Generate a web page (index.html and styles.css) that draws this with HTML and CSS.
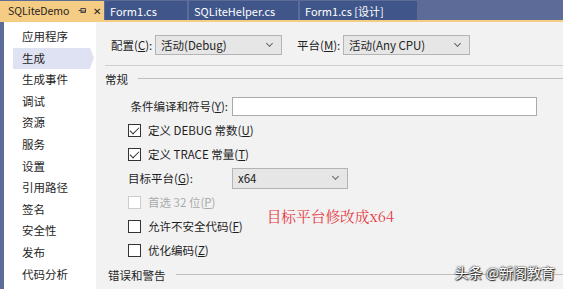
FILE: index.html
```html
<!DOCTYPE html>
<html lang="zh-CN">
<head>
    <meta charset="UTF-8">
    <title>SQLiteDemo</title>
    <link rel="stylesheet" href="styles.css">
</head>
<body>
    <div class="window">
        <div class="tabs">
            <div class="tab active">
                <span class="tab_name">SQLiteDemo</span>
                <span class="pin"><svg width="9" height="7" viewBox="0 0 9 7"><path d="M0.5 3.5H3M3 1V6M3 1.5H7.5V5.5H3M3 4H7.5" fill="none" stroke="#444" stroke-width="1"/></svg></span>
                <span class="close">&#x2715;</span>
            </div>
            <div class="tab t1">Form1.cs</div>
            <div class="tab t2">SQLiteHelper.cs</div>
            <div class="tab t3">Form1.cs [设计]</div>
        </div>
        <div class="main">
            <ul class="nav">
                <li>应用程序</li>
                <li class="sel">生成</li>
                <li>生成事件</li>
                <li>调试</li>
                <li>资源</li>
                <li>服务</li>
                <li>设置</li>
                <li>引用路径</li>
                <li>签名</li>
                <li>安全性</li>
                <li>发布</li>
                <li>代码分析</li>
            </ul>
            <div class="content">
                <div class="toprow">
                    <span class="lbl">配置(<u>C</u>):</span>
                    <div class="combo c1">活动(Debug)<span class="arrow"></span></div>
                    <span class="lbl l2">平台(<u>M</u>):</span>
                    <div class="combo c2">活动(Any CPU)<span class="arrow"></span></div>
                </div>
                <div class="group">
                    <span>常规</span><i></i>
                </div>
                <div class="row r_sym">
                    <span class="field_lbl">条件编译和符号(<u>Y</u>):</span>
                    <div class="textbox"></div>
                </div>
                <div class="row chk">
                    <span class="box on"></span>定义 DEBUG 常数(<u>U</u>)
                </div>
                <div class="row chk">
                    <span class="box on"></span>定义 TRACE 常量(<u>T</u>)
                </div>
                <div class="row r_target">
                    <span class="target_lbl">目标平台(<u>G</u>):</span>
                    <div class="combo c3">x64<span class="arrow"></span></div>
                </div>
                <div class="row chk disabled">
                    <span class="box"></span>首选 32 位(<u>P</u>)
                </div>
                <div class="row chk">
                    <span class="box"></span>允许不安全代码(<u>F</u>)
                    <span class="note">目标平台修改成x64</span>
                </div>
                <div class="row chk">
                    <span class="box"></span>优化编码(<u>Z</u>)
                </div>
                <div class="group g2">
                    <span>错误和警告</span><i></i>
                </div>
                <div class="mark">头条 @新阁教育</div>
            </div>
        </div>
    </div>
</body>
</html>
```

FILE: styles.css
```css
*{
    margin: 0;
    padding: 0;
    box-sizing: border-box;
}
body{
    width: 563px;
    height: 289px;
    overflow: hidden;
    font-family: 'Noto Sans CJK SC', 'Noto Sans', sans-serif;
    font-size: 11px;
    color: #1e1e1e;
    background-color: #f2f2f2;
}
.window{
    display: flex;
    flex-direction: column;
    height: 289px;
}
.tabs{
    display: flex;
    height: 22px;
    padding-top: 1px;
    background-color: #5d6b99;
    border-bottom: 2px solid #f5cc84;
}
.tab{
    display: flex;
    align-items: center;
    height: 19px;
    padding-left: 5px;
    margin-right: 2px;
    font-size: 11px;
    color: #fff;
    background-color: #40568a;
}
.tab.active{
    width: 104px;
    padding-left: 8px;
    margin-right: 1px;
    font-size: 10.5px;
    color: #1e1e1e;
    background-color: #f5cc84;
}
.tab_name{
    flex: 1;
}
.pin{
    display: flex;
    margin-right: 6px;
}
.close{
    font-size: 10px;
    margin-right: 3px;
}
.t1{
    width: 82px;
}
.t2{
    width: 109px;
}
.t3{
    width: 117px;
}
.main{
    flex: 1;
    display: flex;
    border-left: 4px solid #5d6b99;
}
.nav{
    width: 92px;
    padding-top: 4px;
    background-color: #fff;
    list-style: none;
}
.nav li{
    position: relative;
    height: 21.6px;
    margin-left: 9px;
    margin-right: 6px;
    padding-left: 9px;
    line-height: 21px;
    font-size: 11.5px;
    color: #1e1e1e;
}
.nav .sel{
    background-color: #dfe2f2;
}
.nav .sel::after{
    content: '';
    position: absolute;
    right: -4px;
    top: 0;
    border-top: 10.8px solid transparent;
    border-bottom: 10.8px solid transparent;
    border-left: 4px solid #dfe2f2;
}
.content{
    position: relative;
    flex: 1;
    padding-left: 12px;
}
.toprow{
    display: flex;
    align-items: center;
    height: 44px;
    padding-top: 2px;
    margin-left: -3px;
    padding-left: 6px;
    border-bottom: 1px solid #cfcfcf;
}
.lbl{
    width: 44px;
    font-size: 11.5px;
}
.l2{
    margin-left: 15px;
    width: 46px;
}
.combo{
    position: relative;
    height: 20px;
    padding-left: 5px;
    line-height: 18px;
    font-size: 11.5px;
    border: 1px solid #b4b4b4;
    background-color: #e6e6e6;
}
.c1{
    width: 127px;
}
.c2{
    width: 127px;
}
.c3{
    width: 116px;
    height: 21px;
    line-height: 19px;
}
.arrow{
    position: absolute;
    right: 9px;
    top: 5px;
    width: 5px;
    height: 5px;
    border-right: 1px solid #666;
    border-bottom: 1px solid #666;
    transform: rotate(45deg);
}
.group{
    display: flex;
    align-items: center;
    height: 25px;
    margin-left: -3px;
    font-size: 11.5px;
}
.group i{
    flex: 1;
    height: 1px;
    margin-left: 10px;
    background-color: #bfbfbf;
}
.row{
    display: flex;
    align-items: center;
    height: 24px;
    font-size: 11.5px;
}
.r_sym{
    margin-top: 3px;
}
.field_lbl{
    width: 124px;
    padding-right: 4px;
    text-align: right;
}
.textbox{
    width: 305px;
    height: 19px;
    border: 1px solid #aaa;
    background-color: #fff;
}
.chk{
    padding-left: 20px;
}
.box{
    position: relative;
    width: 13px;
    height: 13px;
    margin-right: 7px;
    border: 1px solid #333;
    background-color: #fff;
}
.box.on::after{
    content: '';
    position: absolute;
    left: 3px;
    top: 0;
    width: 4px;
    height: 8px;
    border-right: 1.5px solid #333;
    border-bottom: 1.5px solid #333;
    transform: rotate(45deg);
}
.disabled{
    color: #aaa;
}
.disabled .box{
    border-color: #ccc;
}
.r_target{
    padding-left: 20px;
}
.target_lbl{
    width: 104px;
}
.note{
    margin-left: 24px;
    margin-top: -22px;
    font-family: 'Noto Serif CJK SC', 'Liberation Serif', serif;
    font-size: 14.7px;
    color: #e53a44;
}
.g2{
    margin-top: 0;
    margin-left: 0;
    height: 25px;
}
.mark{
    position: absolute;
    right: 8px;
    bottom: 7px;
    font-size: 14px;
    color: #fff;
    text-shadow: 0 0 2px #222, 0 0 1px #222, 1px 1px 1px #222;
}
```
